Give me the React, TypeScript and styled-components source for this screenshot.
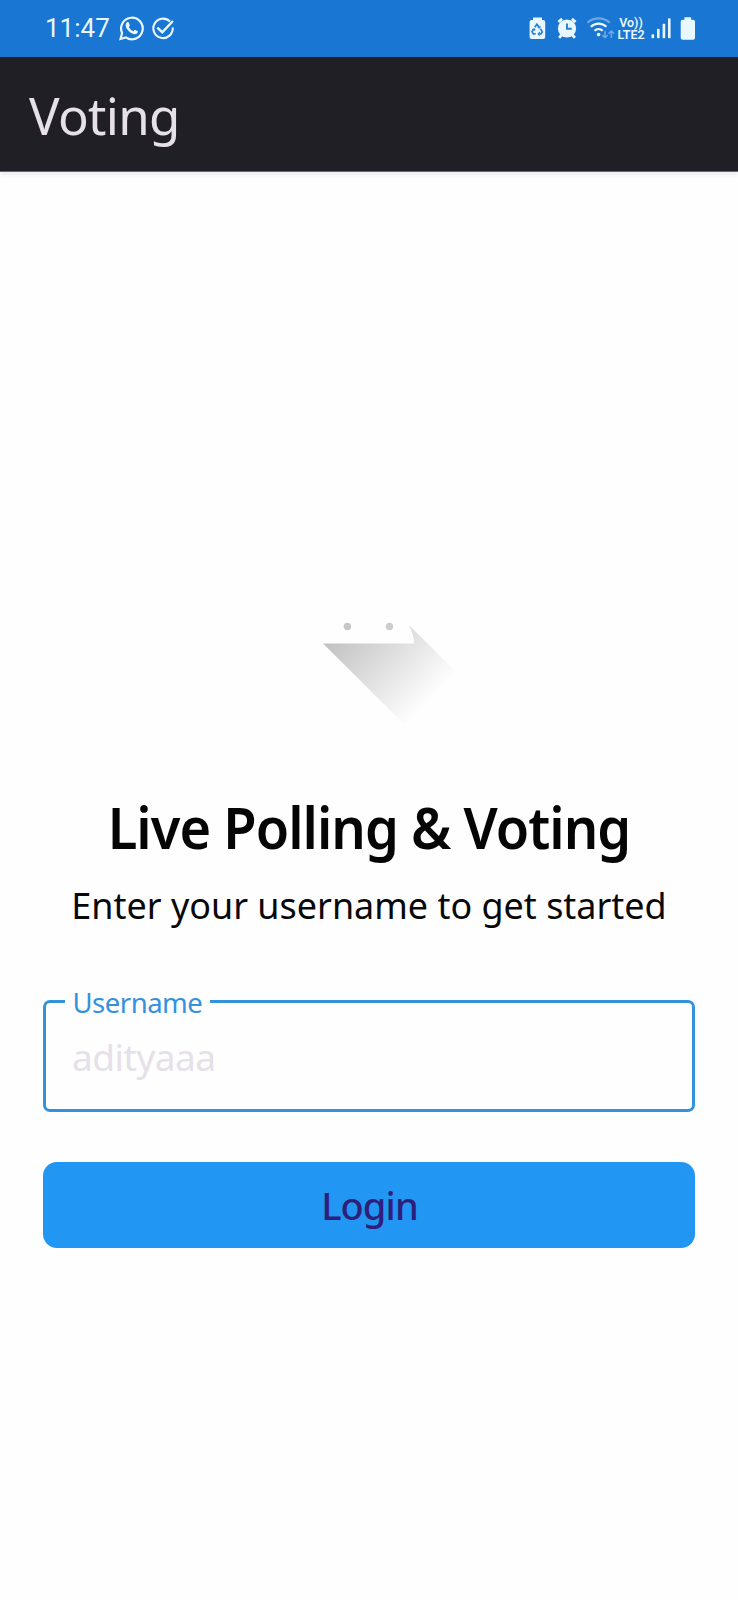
import React from "react";
import styled, { createGlobalStyle } from "styled-components";

const GlobalStyle = createGlobalStyle`
  * { box-sizing: border-box; }
  body { margin: 0; background: #fefefe; }
`;

const Screen = styled.div`
  display: flex;
  flex-direction: column;
  height: 1600px;
  background: #fefefe;
  font-family: "Noto Sans", sans-serif;
  overflow: hidden;
`;

const StatusBar = styled.header`
  display: flex;
  justify-content: space-between;
  flex: none;
  height: 57px;
  background: #1976d2;
  color: #e9f7ff;
`;

const StatusGroup = styled.div<{ $start?: number; $end?: number }>`
  display: flex;
  height: 57px;
  padding-left: ${(p) => p.$start ?? 0}px;
  padding-right: ${(p) => p.$end ?? 0}px;
`;

const Clock = styled.span`
  width: 72px;
  font: 400 26px/57px Roboto, sans-serif;
`;

const Network = styled.div`
  display: flex;
  flex-direction: column;
  align-items: center;
  width: 30px;
  padding-top: 17px;
  font: 600 12.5px/12px Roboto, sans-serif;
  white-space: nowrap;
`;

const AppBar = styled.div`
  flex: none;
  height: 115px;
  padding-left: 29px;
  background: #211f26;
  border-bottom: 1px solid #6b6a6e;
  box-shadow: 0 2px 5px rgba(0, 0, 0, 0.09);
`;

const AppTitle = styled.h1`
  margin: 0;
  color: #e6e0e9;
  font-size: 51px;
  font-weight: 400;
  line-height: 116px;
  letter-spacing: -0.7px;
`;

const Content = styled.main`
  display: flex;
  flex-direction: column;
  padding: 448px 43px 0;
`;

const Logo = styled.svg`
  align-self: center;
  display: block;
`;

const Heading = styled.h2`
  margin: 57px 0 0;
  color: #050505;
  font-size: 57px;
  font-weight: 600;
  line-height: 80px;
  letter-spacing: -1px;
  text-align: center;
  white-space: nowrap;
  transform: scaleX(0.951);
`;

const Subheading = styled.p`
  margin: 10px 0 0;
  color: #080808;
  font-size: 37px;
  line-height: 56px;
  text-align: center;
  white-space: nowrap;
  transform: scaleX(0.971);
`;

const Field = styled.fieldset`
  height: 131px;
  margin: 48px 0 0;
  padding: 0 26px;
  border: 3px solid #3492dc;
  border-radius: 7px;
`;

const Label = styled.legend`
  width: 145px;
  height: 40px;
  margin-left: -7px;
  padding: 0 7.5px;
  color: #3492dc;
  font-size: 27.5px;
  line-height: 43px;
  letter-spacing: -0.5px;
  white-space: nowrap;
`;

const Input = styled.input`
  display: block;
  width: 100%;
  height: 60px;
  margin-top: 6px;
  padding: 0;
  border: 0;
  outline: 0;
  background: transparent;
  font: 400 37px/60px "Noto Sans", sans-serif;
  letter-spacing: -0.5px;
  &::placeholder { color: #e6e0e9; opacity: 1; }
`;

const LoginButton = styled.button`
  height: 86px;
  margin-top: 50px;
  padding: 0 0 0 1px;
  border: 0;
  border-radius: 14px;
  background: #2196f3;
  color: #2f1e7b;
  font: 500 38px/86px "Noto Sans", sans-serif;
  letter-spacing: -0.9px;
`;

export default function App() {
  return (
    <Screen>
      <GlobalStyle />
      <StatusBar>
        <StatusGroup $start={45}>
          <Clock>11:47</Clock>
          <svg width="64" height="57" viewBox="117.500 0 64 57" fill="none" stroke="currentColor" strokeWidth="2.200">
            <path d="M121 39l1.600-6A10.800 10.800 0 1 1 126.300 37.400z" />
            <path d="M127.200 22.500c1-.8 2-.5 2.300.4l.8 2.300c.2.600-.7 1.300-1 1.800 1 2 2.500 3.300 4.600 4.200.7-.6 1.200-1.500 1.800-1.300l2.400 1.200c.8.500-.1 2.100-.9 2.600-2.300 1.300-5.500-.3-7.800-2.500-2.500-2.400-4.600-6-2.200-8.700z" fill="currentColor" stroke="none" />
            <path d="M170.500 21.600A9.700 9.700 0 1 0 173.200 27.500" strokeWidth="2.100" />
            <path d="M157.800 27.600l5 4.600 10.600-11.200" strokeWidth="2.400" />
          </svg>
        </StatusGroup>
        <StatusGroup $end={38}>
          <svg width="90" height="57" viewBox="526 0 90 57" fill="none" stroke="currentColor">
            <path d="M533 20v-2.500h9V20h1.200q2 0 2 2v15q0 2-2 2h-11.600q-2 0-2-2V22q0-2 2-2z" fill="currentColor" stroke="none" />
            <g stroke="#287fd6" strokeWidth="1.700">
              <path d="M534.800 27.300l2.100-3 2.200 3M540.300 28.700l2 3.200-1.400 2h-2.600M535.700 33.900h-2.300l-1.400-2.100 1.600-2.700" />
              <path d="M537.700 27.500l2.100.3.200-2M539.700 32.100l-1.500 1.800 1.500 1.700M532.400 29.700l1.700-.9 1.100 1.800" strokeWidth="1.100" />
            </g>
            <circle cx="567" cy="28.500" r="9.100" fill="currentColor" stroke="none" />
            <path d="M558.400 22l3.700-3.100M575.600 22l-3.700-3.100M561.500 35l-2.400 2.900M572.500 35l2.400 2.900" strokeWidth="2.800" />
            <path d="M567 23.600v5.200h4.700" stroke="#287fd6" strokeWidth="1.900" />
            <g strokeWidth="2.200">
              <path d="M587.500 22.700a16.500 16.500 0 0 1 22.200 0" opacity=".4" />
              <path d="M590.800 26.800a11 11 0 0 1 15.600 0M594.500 30.700a6 6 0 0 1 8.200 0" />
            </g>
            <circle cx="598.600" cy="34.600" r="1.800" fill="currentColor" stroke="none" />
            <path d="M605 31v6.600m-2.600-2.500l2.600 2.500 2.600-2.500M611.300 38v-7m-2.700 2.600l2.700-2.600 2.700 2.600" strokeWidth="1.500" opacity=".4" />
          </svg>
          <Network>
            <span>Vo))</span>
            <span>LTE2</span>
          </Network>
          <svg width="54" height="57" viewBox="646 0 54 57" fill="currentColor">
            <rect x="651.500" y="34.200" width="2.600" height="4.100" rx=".8" />
            <rect x="657" y="28.800" width="2.600" height="9.500" rx=".8" />
            <rect x="662.600" y="23.700" width="2.600" height="14.600" rx=".8" />
            <rect x="668" y="18.300" width="2.600" height="20" rx=".8" />
            <path d="M684.500 19.800v-2.500h6.600v2.500h1.900q2 0 2 2v16q0 2-2 2h-10.300q-2 0-2-2v-16q0-2 2-2z" />
          </svg>
        </StatusGroup>
      </StatusBar>
      <AppBar>
        <AppTitle>Voting</AppTitle>
      </AppBar>
      <Content>
        <Logo width="180" height="110" viewBox="279 620 180 110">
          <defs>
            <linearGradient id="shade" gradientUnits="userSpaceOnUse" x1="342" y1="620" x2="428" y2="702">
              <stop offset="0" stopColor="#bfbfbf" />
              <stop offset="1" stopColor="#fefefe" />
            </linearGradient>
          </defs>
          <path d="M323 643.600H414.300Q413.500 634 409 625L458 674 405 725z" fill="url(#shade)" />
          <circle cx="347.400" cy="626.500" r="3.700" fill="#c6c6c6" />
          <circle cx="389.500" cy="626.500" r="3.700" fill="#cecece" />
        </Logo>
        <Heading>Live Polling &amp; Voting</Heading>
        <Subheading>Enter your username to get started</Subheading>
        <Field>
          <Label>Username</Label>
          <Input placeholder="adityaaa" aria-label="Username" />
        </Field>
        <LoginButton>Login</LoginButton>
      </Content>
    </Screen>
  );
}
